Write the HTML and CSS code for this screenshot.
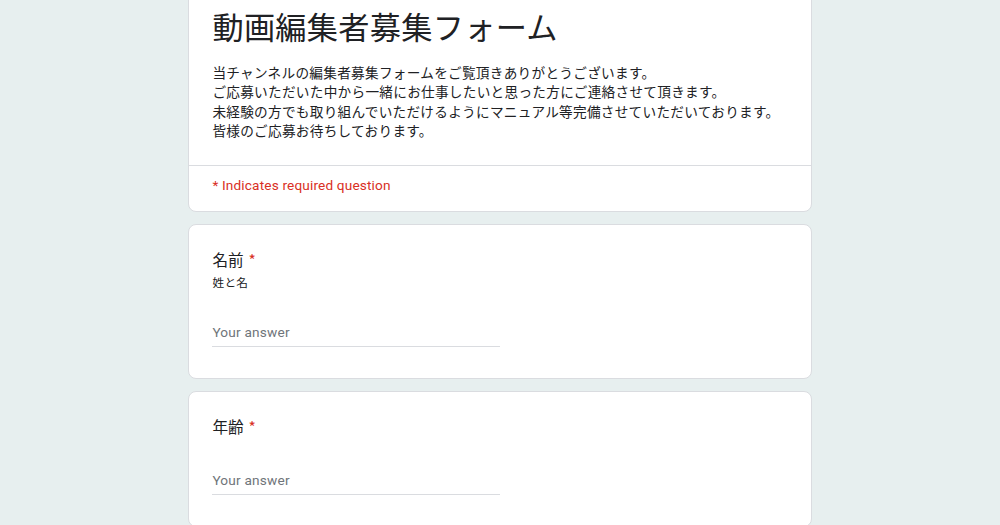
FILE: index.html
```
<!DOCTYPE html>
<html lang="ja">
<head>
<meta charset="utf-8">
<title>動画編集者募集フォーム</title>
<link rel="stylesheet" href="styles.css">
</head>
<body>
<main class="form">
  <section class="card card-head">
    <div class="head-main">
      <h1 class="title">動画編集者募集フォーム</h1>
      <div class="desc">当チャンネルの編集者募集フォームをご覧頂きありがとうございます。<br>ご応募いただいた中から一緒にお仕事したいと思った方にご連絡させて頂きます。<br>未経験の方でも取り組んでいただけるようにマニュアル等完備させていただいております。<br>皆様のご応募お待ちしております。</div>
    </div>
    <div class="required-note">* Indicates required question</div>
  </section>

  <section class="card question">
    <div class="q-title">名前<span class="star">*</span></div>
    <div class="q-help">姓と名</div>
    <div class="answer">Your answer</div>
  </section>

  <section class="card question">
    <div class="q-title">年齢<span class="star">*</span></div>
    <div class="answer">Your answer</div>
  </section>
</main>
</body>
</html>
```
FILE: styles.css
```
html, body {
  margin: 0;
  padding: 0;
}
body {
  background: #e7efef;
  font-family: "Noto Sans CJK JP", "Noto Sans", sans-serif;
  color: #202124;
  overflow: hidden;
}
.form {
  width: 624px;
  margin: -10px auto 0;
  display: flex;
  flex-direction: column;
  gap: 12.5px;
}
.card {
  background: #fff;
  border: 1px solid #dadce0;
  border-radius: 8px;
}
.head-main {
  padding: 15px 23.4px 24px;
  border-bottom: 1px solid #dadce0;
}
.title {
  margin: 0;
  font-size: 31.2px;
  line-height: 40px;
  font-weight: 400;
  letter-spacing: 0.3px;
  color: #202124;
}
.desc {
  margin-top: 16.75px;
  font-size: 13.65px;
  line-height: 19.5px;
  letter-spacing: 0.27px;
  color: #202124;
}
.required-note {
  padding: 10.7px 23.4px 14.75px;
  font-family: Roboto, "Noto Sans CJK JP", sans-serif;
  font-size: 13.65px;
  line-height: 19.5px;
  letter-spacing: 0.15px;
  color: #d93025;
}
.question {
  padding: 22.6px 23.4px 31.2px;
}
.q-title {
  font-size: 15.6px;
  line-height: 23.4px;
  height: 23.4px;
  color: #202124;
}
.star {
  color: #d93025;
  padding-left: 5px;
}
.q-help {
  margin-top: 3px;
  margin-bottom: 2px;
  font-size: 11.7px;
  line-height: 16px;
  letter-spacing: 0.3px;
  color: #202124;
}
.answer {
  margin-top: 33px;
  width: 288px;
  padding-bottom: 3px;
  border-bottom: 1px solid #dadce0;
  font-family: Roboto, sans-serif;
  font-size: 13.65px;
  line-height: 19.5px;
  letter-spacing: 0.2px;
  color: #70757a;
}
```
